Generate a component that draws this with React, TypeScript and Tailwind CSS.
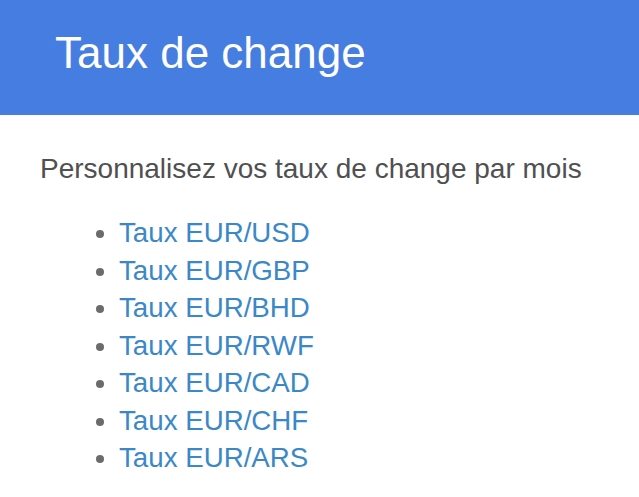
import React from "react";

const rates = ["USD", "GBP", "BHD", "RWF", "CAD", "CHF", "ARS"];

const App: React.FC = () => {
  return (
    <div className="min-h-[497px] w-full bg-white font-['Liberation_Sans',Arial,sans-serif]">
      {/* Header band */}
      <header className="h-[115px] bg-[#467de0] pl-[55px] pt-[28px]">
        <h1 className="text-[44px] leading-[49px] text-white">Taux de change</h1>
      </header>

      <main className="pl-[40px] pt-[38px]">
        <p className="text-[28px] leading-[31px] text-[#505050]">
          Personnalisez vos taux de change par mois
        </p>

        <ul className="mt-[30px] list-disc pl-[79px] marker:text-[#6b6b6b]">
          {rates.map((code) => (
            <li key={code} className="text-[27.7px] leading-[37.5px]">
              <a href="#" className="text-[#3a88c7]">
                Taux EUR/{code}
              </a>
            </li>
          ))}
        </ul>
      </main>
    </div>
  );
};

export default App;
